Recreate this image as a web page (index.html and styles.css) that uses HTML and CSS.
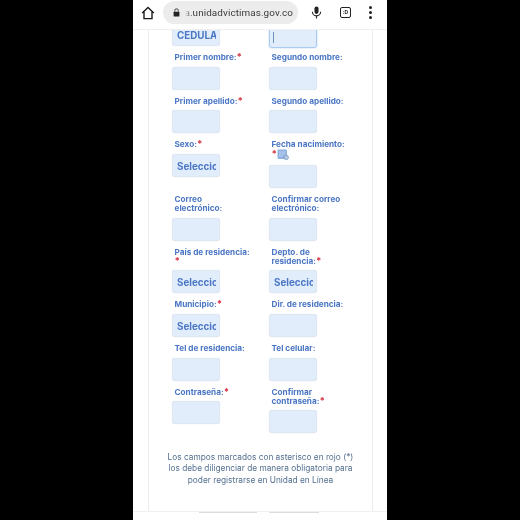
FILE: index.html
```html
<!DOCTYPE html>
<html lang="es">
<head>
    <meta charset="UTF-8">
    <title>Registro - Unidad en Linea</title>
    <link rel="stylesheet" href="styles.css">
</head>
<body>
    <div class="phone">
        <!-- Browser toolbar -->
        <header class="toolbar">
            <svg class="home-icon" viewBox="0 0 14 14" width="14" height="14">
                <path d="M1.2 7 7 1.5 12.8 7M3 5.6V12.6H11V5.6" fill="none" stroke="#1c1c1c" stroke-width="1.4"/>
            </svg>
            <div class="url-bar">
                <svg class="lock-icon" viewBox="0 0 8 10" width="7" height="9">
                    <path d="M2 4V2.8a2 2 0 0 1 4 0V4" fill="none" stroke="#222" stroke-width="1"/>
                    <rect x="0.7" y="4" width="6.6" height="5.5" rx="0.6" fill="#222"/>
                </svg>
                <div class="url-text"><span>sprea.unidadvictimas.gov.co</span></div>
            </div>
            <svg class="mic-icon" viewBox="0 0 12 14" width="11" height="13">
                <rect x="3.8" y="0.5" width="4.4" height="8" rx="2.2" fill="#222"/>
                <path d="M1.5 6.2a4.5 4.5 0 0 0 9 0M6 10.7V13.5" fill="none" stroke="#222" stroke-width="1.2"/>
            </svg>
            <div class="tab-count">:D</div>
            <div class="menu-dots"><i></i><i></i><i></i></div>
        </header>

        <!-- Page content -->
        <main class="page">
            <form class="card">
                <div class="form-grid">
                    <div class="field field-first">
                        <input class="box" type="text" value="CEDULA">
                    </div>
                    <div class="field field-first field-focus">
                        <input class="box box-focus" type="text">
                        <span class="caret"></span>
                    </div>

                    <div class="field"><label>Primer nombre:<b>*</b></label><input class="box" type="text"></div>
                    <div class="field"><label>Segundo nombre:</label><input class="box" type="text"></div>

                    <div class="field"><label>Primer apellido:<b>*</b></label><input class="box" type="text"></div>
                    <div class="field"><label>Segundo apellido:</label><input class="box" type="text"></div>

                    <div class="field"><label>Sexo:<b>*</b></label><select class="box"><option>Seleccione</option></select></div>
                    <div class="field">
                        <label>Fecha nacimiento:<br><b>*</b><svg class="cal-icon" viewBox="0 0 12 11" width="12" height="11">
                            <rect x="0.5" y="0.5" width="9.5" height="9.5" rx="1" fill="#8fb2e2"/>
                            <path d="M2 3H8.5M2 5H8.5M2 7H6" stroke="#c9dbf4" stroke-width="0.8"/>
                            <circle cx="9.2" cy="8.4" r="2.3" fill="#b7c9e2" stroke="#6f8fbd" stroke-width="0.6"/>
                        </svg></label>
                        <input class="box" type="text">
                    </div>

                    <div class="field"><label>Correo<br>electrónico:</label><input class="box" type="text"></div>
                    <div class="field"><label>Confirmar correo<br>electrónico:</label><input class="box" type="text"></div>

                    <div class="field"><label>País de residencia:<br><b>*</b></label><select class="box"><option>Seleccione</option></select></div>
                    <div class="field"><label>Depto. de<br>residencia:<b>*</b></label><select class="box"><option>Seleccione</option></select></div>

                    <div class="field"><label>Municipio:<b>*</b></label><select class="box"><option>Seleccione</option></select></div>
                    <div class="field"><label>Dir. de residencia:</label><input class="box" type="text"></div>

                    <div class="field"><label>Tel de residencia:</label><input class="box" type="text"></div>
                    <div class="field"><label>Tel celular:</label><input class="box" type="text"></div>

                    <div class="field"><label>Contraseña:<b>*</b></label><input class="box" type="password"></div>
                    <div class="field"><label>Confirmar<br>contraseña:<b>*</b></label><input class="box" type="password"></div>
                </div>

                <p class="note">Los campos marcados con asterisco en rojo (*)<br>los debe diligenciar de manera obligatoria para<br>poder registrarse en Unidad en Línea</p>
            </form>
        </main>

        <!-- Next section just showing at the bottom -->
        <div class="next-section">
            <span class="next-btn next-btn-left"></span>
            <span class="next-btn next-btn-right"></span>
        </div>
    </div>
</body>
</html>
```

FILE: styles.css
```css
* {
    box-sizing: border-box;
}

html, body {
    height: 100%;
}

body {
    margin: 0;
    background-color: #000;
    font-family: Inter, "Liberation Sans", sans-serif;
}

.phone {
    width: 254px;
    height: 520px;
    margin: 0 auto;
    background-color: #fff;
    display: flex;
    flex-direction: column;
    overflow: hidden;
}

/* Toolbar */
.toolbar {
    flex: none;
    height: 30px;
    display: flex;
    align-items: center;
    padding: 0 0 4px 8px;
    background-color: #fff;
    border-bottom: 1px solid #f0f0f0;
    filter: blur(0.3px);
}

.url-bar {
    width: 135px;
    height: 23px;
    margin-left: 8px;
    padding-left: 10px;
    display: flex;
    align-items: center;
    gap: 5px;
    background-color: #ececec;
    border-radius: 12px;
}

.url-text {
    width: 108px;
    overflow: hidden;
    display: flex;
    justify-content: flex-end;
    white-space: nowrap;
    font-size: 9.9px;
    font-family: Roboto, sans-serif;
    letter-spacing: 0.1px;
    color: #3a3a3a;
    mask-image: linear-gradient(to right, transparent, #000 6px);
}

.url-text span {
    flex: none;
}

.mic-icon {
    margin-left: 13px;
}

.tab-count {
    width: 11px;
    height: 11px;
    margin-left: 18px;
    border: 1.4px solid #222;
    border-radius: 2px;
    font-size: 5px;
    font-weight: 700;
    line-height: 8px;
    text-align: center;
    color: #222;
}

.menu-dots {
    margin-left: 18px;
    display: flex;
    flex-direction: column;
    gap: 2px;
}

.menu-dots i {
    width: 3px;
    height: 3px;
    border-radius: 50%;
    background-color: #222;
}

/* Page */
.page {
    flex: 1;
    min-height: 0;
    overflow: hidden;
    display: flex;
    padding: 0 14px 0 15px;
    filter: blur(0.3px);
}

.card {
    flex: 1;
    border-left: 1px solid #ececec;
    border-right: 1px solid #ececec;
}

.form-grid {
    display: grid;
    grid-template-columns: 97px 97px;
    align-items: start;
    /* page is scrolled, the first row is cut by the toolbar */
    margin: -7px 0 0 23px;
}

.field {
    position: relative;
    padding-bottom: 5.2px;
}

.field-focus {
    padding-top: 2px;
    margin-bottom: -2px;
}

.field label {
    display: block;
    padding: 1.7px 0 0 2.5px;
    margin-bottom: 4.8px;
    font-size: 8.2px;
    line-height: 9px;
    font-weight: 700;
    color: #4a76c4;
}

.field label b {
    font-size: 9px;
    line-height: 0;
    color: #d8404f;
}

.cal-icon {
    vertical-align: -3px;
}

.box {
    display: block;
    width: 48px;
    height: 23px;
    padding: 1px 3px 0 4px;
    border: 1px solid #dfe7f2;
    border-radius: 3px;
    background-color: #e2edfc;
    box-shadow: 0 0 1px #c9d6e8;
    appearance: none;
    font-family: Inter, "Liberation Sans", sans-serif;
    font-size: 9.8px;
    font-weight: 700;
    color: #4a76c4;
    outline: none;
}

.box-focus {
    border: 1px solid #a9cbf2;
    box-shadow: 0 0 2px #a9cbf2;
}

.caret {
    position: absolute;
    left: 4px;
    bottom: 10px;
    width: 1px;
    height: 11px;
    background-color: #6f8fbd;
}

.note {
    margin: 0;
    padding-top: 13px;
    text-align: center;
    white-space: nowrap;
    font-size: 8.3px;
    line-height: 11.6px;
    color: #54708f;
}

/* Bottom strip */
.next-section {
    flex: none;
    height: 9px;
    display: flex;
    border-top: 1px solid #f0f0f0;
    background-color: #fff;
}

.next-btn {
    height: 1px;
    background-color: #dcdcdc;
}

.next-btn-left {
    width: 58px;
    margin-left: 66px;
}

.next-btn-right {
    width: 50px;
    margin-left: 12px;
}
```
